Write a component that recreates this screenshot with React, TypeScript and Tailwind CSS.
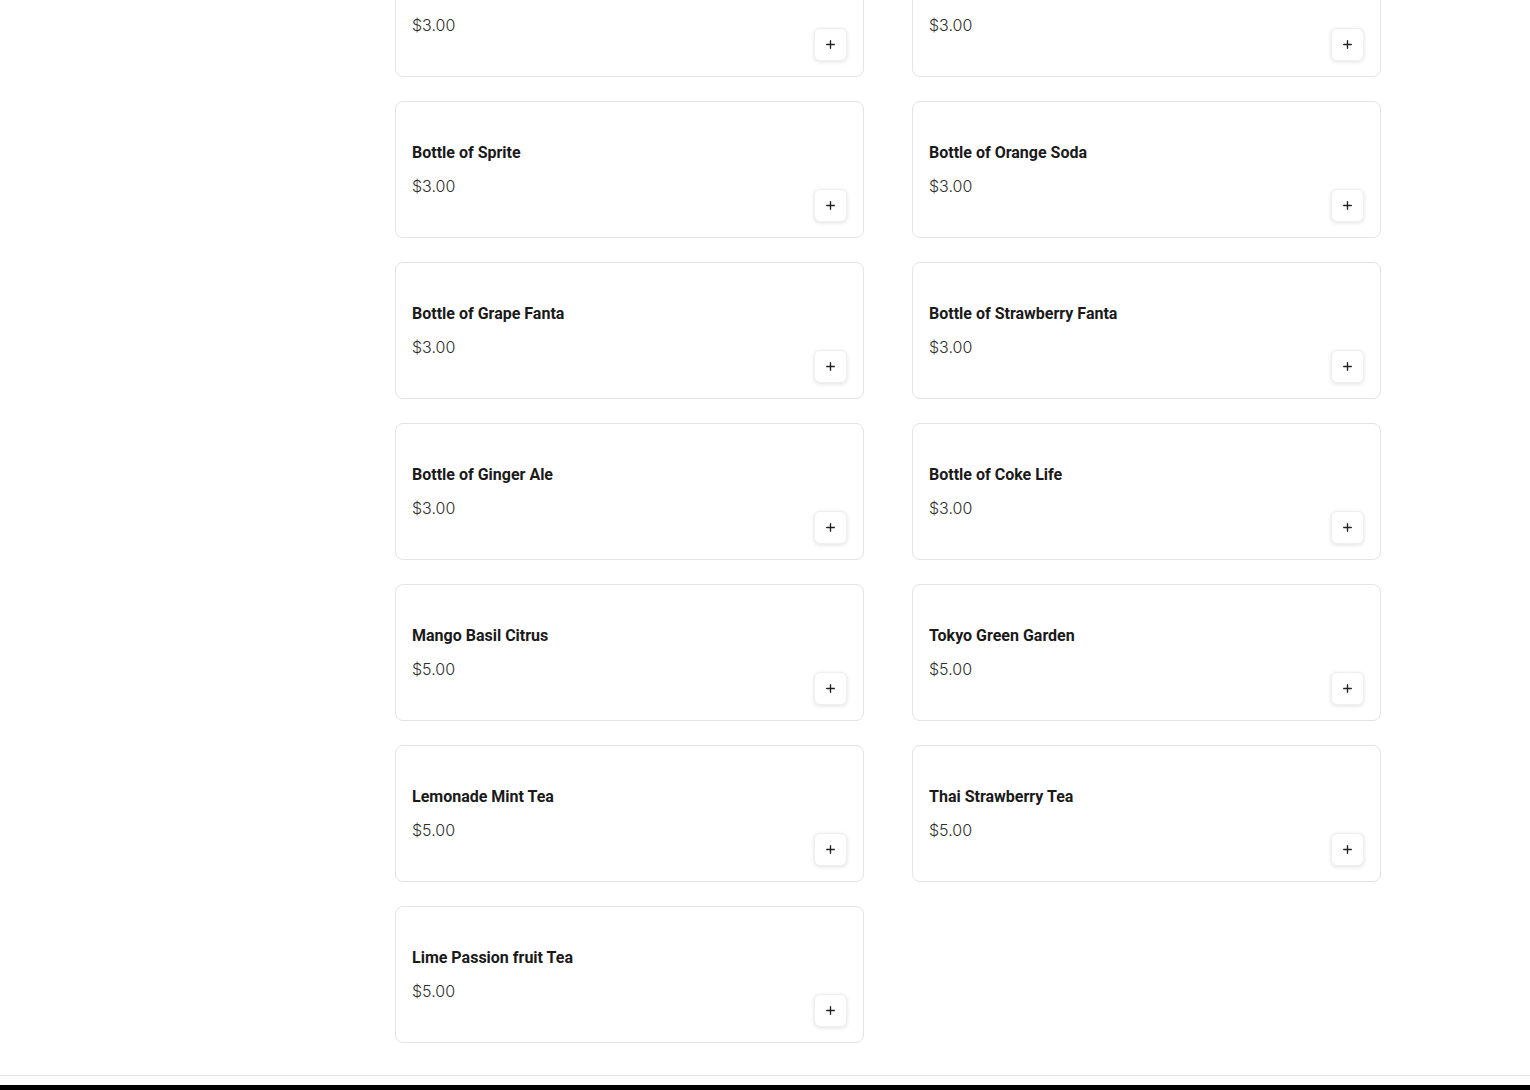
import React from 'react';
import { Plus } from 'lucide-react';

const items = [
  { name: 'Bottle of Coke', price: 3 },
  { name: 'Bottle of Diet Coke', price: 3 },
  { name: 'Bottle of Sprite', price: 3 },
  { name: 'Bottle of Orange Soda', price: 3 },
  { name: 'Bottle of Grape Fanta', price: 3 },
  { name: 'Bottle of Strawberry Fanta', price: 3 },
  { name: 'Bottle of Ginger Ale', price: 3 },
  { name: 'Bottle of Coke Life', price: 3 },
  { name: 'Mango Basil Citrus', price: 5 },
  { name: 'Tokyo Green Garden', price: 5 },
  { name: 'Lemonade Mint Tea', price: 5 },
  { name: 'Thai Strawberry Tea', price: 5 },
  { name: 'Lime Passion fruit Tea', price: 5 },
];

const MenuCard = ({ name, price }: { name: string; price: number }) => (
  <div className="h-[137px] rounded-lg border border-[#e4e4e4] bg-white pl-4 pr-4 pb-[15px] pt-4 flex justify-between items-end">
    <div className="flex flex-col self-start pt-[25px]">
      <h3 className="text-[16px] leading-5 font-bold text-[#1a1a1a] font-['Roboto',sans-serif]">{name}</h3>
      <p className="mt-[11px] text-[16px] leading-6 text-[#2e2e2e] font-['Inter',sans-serif] font-light">${price.toFixed(2)}</p>
    </div>
    <button className="w-[33px] h-[33px] rounded-md bg-white border border-[#efefef] shadow-[0_1px_4px_rgba(0,0,0,0.12)] flex items-center justify-center text-[#222]">
      <Plus size={13} strokeWidth={2.5} />
    </button>
  </div>
);

export default function App() {
  return (
    <div className="h-screen overflow-hidden bg-white">
      <div className="-mt-[60px]">
        <div className="pl-[395px] pr-[149px] pb-8">
          <div className="grid grid-cols-2 gap-x-12 gap-y-6">
            {items.map((it) => (
              <MenuCard key={it.name} name={it.name} price={it.price} />
            ))}
          </div>
        </div>
        <footer>
          <div className="border-t border-[#e2e2e2] h-[10px] bg-[#fcfcfc]" />
          <div className="h-24 bg-black" />
        </footer>
      </div>
    </div>
  );
}
